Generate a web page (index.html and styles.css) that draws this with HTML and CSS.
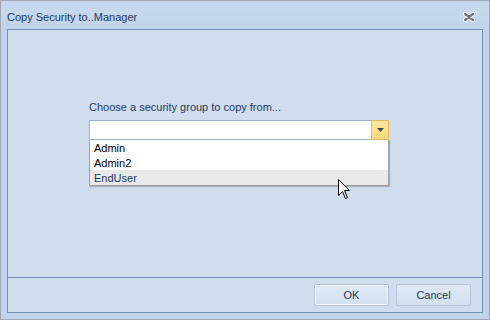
FILE: index.html
```html
<!DOCTYPE html>
<html>
<head>
<meta charset="utf-8">
<link rel="stylesheet" href="styles.css">
</head>
<body>
<div class="window">
  <div class="titlebar">
    <span class="title">Copy Security to..Manager</span>
    <svg class="close" width="12" height="10" viewBox="0 0 12 10">
      <path d="M2 2 L10 8 M10 2 L2 8" stroke="#ffffff" stroke-width="4.2" stroke-linecap="round"/>
      <path d="M2 2 L10 8 M10 2 L2 8" stroke="#6a737f" stroke-width="2.2" stroke-linecap="round"/>
    </svg>
  </div>
  <div class="frame">
    <div class="panel">
      <div class="content">
        <div class="field">
          <div class="label">Choose a security group to copy from...</div>
          <div class="combo">
            <div class="combo-input"></div>
            <div class="combo-btn">
              <svg width="7" height="5" viewBox="0 0 7 5"><path d="M0 0 H7 L3.5 4 Z" fill="#3d4a5c"/></svg>
            </div>
          </div>
          <div class="list">
            <div class="item">Admin</div>
            <div class="item">Admin2</div>
            <div class="item hot">EndUser</div>
          </div>
        </div>
      </div>
      <div class="footer">
        <button class="btn default">OK</button>
        <button class="btn">Cancel</button>
      </div>
    </div>
  </div>
  <svg class="cursor" width="13" height="21" viewBox="0 0 13 21">
    <path d="M0.5 0.5 L0.5 16.5 L4.5 12.5 L7.5 19.5 L9.5 18.5 L6.5 11.5 L11.5 11.5 Z" fill="#ffffff" stroke="#000000" stroke-width="1" stroke-linejoin="miter"/>
  </svg>
</div>
</body>
</html>
```
FILE: styles.css
```css
html, body {
  margin: 0;
  padding: 0;
}
body {
  font-family: "Liberation Sans", Arial, sans-serif;
  font-size: 11px;
  background: #c4d6ec;
}
.window {
  position: relative;
  width: 490px;
  height: 320px;
  box-sizing: border-box;
  border: 1px solid #9ea7b3;
  background: linear-gradient(#c9daef, #c0d3ea 30px, #c1d3ea);
  display: flex;
  flex-direction: column;
}
.titlebar {
  height: 28px;
  flex: none;
  display: flex;
  align-items: center;
  justify-content: space-between;
  padding: 0 14px 0 6px;
  box-sizing: border-box;
}
.title {
  color: #1e3a5c;
  font-size: 11px;
  margin-top: 3px;
}
.close {
  display: block;
  margin-top: 3px;
}
.frame {
  flex: 1;
  padding: 0 6px 6px 6px;
  display: flex;
}
.panel {
  flex: 1;
  border: 1px solid #7892b6;
  background: #cfddef;
  display: flex;
  flex-direction: column;
}
.content {
  flex: 1;
  padding: 70px 0 0 81px;
}
.field {
  width: 300px;
}
.label {
  color: #1e3a5c;
  font-size: 11px;
  line-height: 14px;
  margin-bottom: 6px;
}
.combo {
  display: flex;
  height: 20px;
  box-sizing: border-box;
  border: 1px solid #a3b4c9;
  border-right: none;
  background: #ffffff;
}
.combo-input {
  flex: 1;
}
.combo-btn {
  width: 16px;
  margin-top: -1px;
  margin-bottom: -1px;
  border: 1px solid #e3b95d;
  background: linear-gradient(#ffe8a2, #ffd877);
  display: flex;
  align-items: center;
  justify-content: center;
}
.combo-btn svg {
  display: block;
}
.list {
  border: 1px solid #a0a0a0;
  border-top: none;
  background: #ffffff;
  box-shadow: 1px 1px 1px rgba(80, 90, 110, 0.35);
}
.item {
  height: 15px;
  line-height: 16px;
  padding-left: 4px;
  color: #000000;
  font-size: 11px;
}
.item.hot {
  background: #e9e9ea;
  color: #1e3a5c;
}
.footer {
  flex: none;
  height: 35px;
  border-top: 1px solid #7892b6;
  display: flex;
  justify-content: flex-end;
  align-items: flex-start;
  gap: 7px;
  padding: 6px 11px 0 0;
  box-sizing: border-box;
}
.btn {
  width: 75px;
  height: 22px;
  border: 1px solid #b7c6da;
  border-radius: 2px;
  background: linear-gradient(#dfe9f6, #d3e0f1);
  font-family: "Liberation Sans", Arial, sans-serif;
  font-size: 11px;
  color: #1e3a5c;
  padding: 0;
}
.btn.default {
  box-shadow: inset 0 0 0 1px #f4f8fd;
  border-color: #b4c3d8;
}
.cursor {
  position: absolute;
  left: 337px;
  top: 178px;
}
```
